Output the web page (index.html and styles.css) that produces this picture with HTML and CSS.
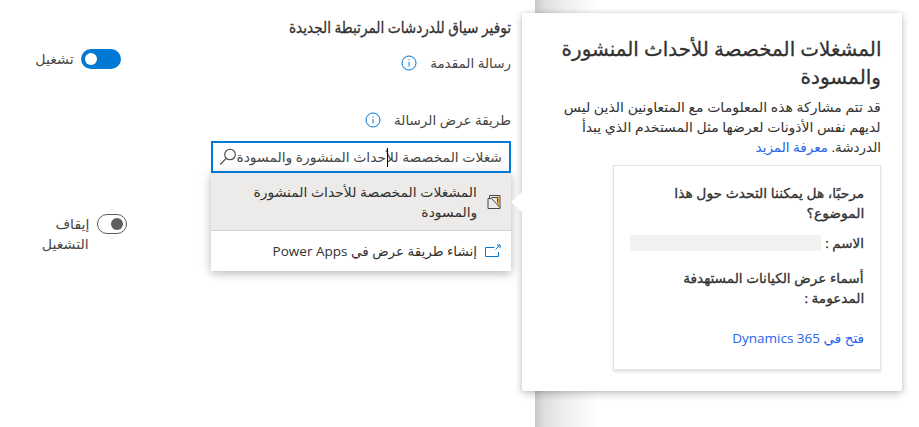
FILE: index.html
```html
<!DOCTYPE html>
<html lang="ar" dir="rtl">
<head>
<meta charset="utf-8">
<title>إعدادات الدردشة</title>
<link rel="stylesheet" href="styles.css">
</head>
<body>
<div class="page">
  <main class="settings">
    <section class="fields">
      <h3 class="section-title"><span class="line">توفير سياق للدردشات المرتبطة الجديدة</span></h3>
      <div class="label label-intro">
        <span class="line">رسالة المقدمة</span>
        <svg class="info" viewBox="0 0 16 16"><circle cx="8" cy="8" r="7"/><path d="M8 7v4.5M8 4.4v1.2"/></svg>
      </div>
      <div class="label label-view">
        <span class="line">طريقة عرض الرسالة</span>
        <svg class="info" viewBox="0 0 16 16"><circle cx="8" cy="8" r="7"/><path d="M8 7v4.5M8 4.4v1.2"/></svg>
      </div>
      <div class="combo">
        <div class="search">
          <span class="line">شغلات المخصصة للأحداث المنشورة والمسودة</span>
          <i class="caret"></i>
          <svg class="lens" viewBox="0 0 18 18"><circle cx="11" cy="6.5" r="5.3"/><path d="M7.2 10.3 1.2 16.5"/></svg>
        </div>
        <div class="menu">
          <div class="option selected">
            <svg class="form-icon" viewBox="0 0 14 16"><path class="gold" d="M11.3 2.5v9"/><path d="M2.5 4V1.5h10.5V14.5M1 4.5v10h12M1 4.5h3.5L13 13.5M4.5 3.5h6v5"/></svg>
            <div><span class="line opt-1">المشغلات المخصصة للأحداث المنشورة</span><span class="line opt-2">والمسودة</span></div>
          </div>
          <div class="option create">
            <svg class="open-icon" viewBox="0 0 16 14"><path d="M9.5 3.5h-9v9h13V8M10.5 5.5 15 1M12 1h3v3"/></svg>
            <span class="line opt-3">إنشاء طريقة عرض في Power Apps</span>
          </div>
        </div>
      </div>
    </section>
    <section class="toggles">
      <div class="toggle-row on"><span class="switch on"></span><span class="line">تشغيل</span></div>
      <div class="toggle-row off"><span class="switch off"></span><div><span class="line off-1">إيقاف</span><span class="line off-2">التشغيل</span></div></div>
    </section>
  </main>
  <div class="edge"></div>
</div>
<aside class="callout">
  <h2 class="callout-title"><span class="line t1">المشغلات المخصصة للأحداث المنشورة</span><span class="line t2">والمسودة</span></h2>
  <p class="notice"><span class="line n1">قد تتم مشاركة هذه المعلومات مع المتعاونين الذين ليس</span><span class="line n2">لديهم نفس الأذونات لعرضها مثل المستخدم الذي يبدأ</span><span class="line n3">الدردشة. <a>معرفة المزيد</a></span></p>
  <div class="card">
    <p class="greeting"><span class="line g1">مرحبًا، هل يمكننا التحدث حول هذا</span><span class="line g2">الموضوع؟</span></p>
    <div class="name"><span class="line">الاسم :</span><span class="blank"></span></div>
    <p class="entities"><span class="line e1">أسماء عرض الكيانات المستهدفة</span><span class="line e2">المدعومة :</span></p>
    <a class="open-link"><span class="line">فتح في Dynamics 365</span></a>
  </div>
</aside>
</body>
</html>
```
FILE: styles.css
```css
* { box-sizing: border-box; }
body, h2, h3, p { margin: 0; font-weight: 400; }
body {
  width: 919px; height: 427px; overflow: hidden; position: relative;
  background: #fff; color: #323130;
  font-family: "Open Sans", "DejaVu Sans", sans-serif;
  font-size: 13.5px; line-height: 20px;
}
svg { display: block; flex: none; fill: none; overflow: visible; }
.line { display: block; width: max-content; white-space: nowrap; transform-origin: right center; }
.page { display: flex; direction: ltr; height: 427px; }
.settings { display: flex; direction: rtl; width: 535px; padding-right: 24px; background: #fff; }
.edge { width: 62px; background: linear-gradient(to right, #c8c8c8, #dedede 15%, #f0f0f0 50%, #fff); }
.fields { width: 300px; padding-top: 17px; }
.section-title, .greeting, .name, .entities { -webkit-text-stroke: .3px currentColor; }
.section-title .line { transform: scaleX(.864); }
.label { display: flex; align-items: center; gap: 13px; height: 20px; color: #484644; }
.label-intro { margin-top: 16px; }
.label-view { margin-top: 37px; }
.info { width: 16px; height: 16px; stroke: #0078d4; }
.combo { margin-top: 11px; }
.search {
  position: relative; display: flex; align-items: center; justify-content: space-between;
  height: 32px; padding: 0 7px 0 6px; border: 2px solid #0078d4; color: #484644;
}
.search .line { width: 240px; transform: scaleX(1.028); }
.lens { width: 18px; height: 18px; stroke: #484644; stroke-width: 1.1; }
.caret { position: absolute; left: 174px; top: 5px; width: 1px; height: 19px; background: #000; }
.menu { box-shadow: 0 3px 8px rgba(0,0,0,.2), 0 0 14px rgba(0,0,0,.1); background: #fff; }
.option { display: flex; align-items: center; }
.selected { height: 58px; padding-right: 10px; gap: 10px; background: #edebe9; border-bottom: 1px solid #d2d0ce; }
.opt-1 { transform: scaleX(1.03); }
.opt-2 { transform: scaleX(1.03); }
.create { height: 40px; padding-right: 10px; gap: 8px; }
.form-icon { width: 14px; height: 16px; stroke: #484644; }
.form-icon .gold { stroke: #efa23c; stroke-width: 2; }
.open-icon { width: 16px; height: 14px; stroke: #0078d4; }
.toggles { width: 150px; }
.toggles .line { transform: scaleX(1.05); }
.toggle-row { display: flex; color: #484644; }
.toggle-row.on { margin: 49px 90px 0 0; gap: 7px; }
.toggle-row.off { margin: 145px 84px 0 0; gap: 8px; }
.switch { display: flex; align-items: center; justify-content: flex-end; flex: none; height: 20px; border-radius: 10px; padding: 0 4px; }
.switch::before { content: ""; width: 12px; height: 12px; border-radius: 50%; }
.switch.on { width: 40px; background: #0078d4; }
.switch.on::before { background: #fff; }
.switch.off { width: 30px; justify-content: flex-start; padding: 0 3px; border: 1px solid #605e5c; }
.switch.off::before { background: #605e5c; }
.callout {
  position: absolute; left: 522px; top: 13px; width: 380px; height: 378px; padding: 22px 21px 0;
  background: #fff; border-radius: 2px; box-shadow: 0 3px 8px rgba(0,0,0,.2), 0 0 5px rgba(0,0,0,.12);
}
.callout::before {
  content: ""; position: absolute; left: -11px; top: 178px; width: 12px; height: 22px;
  background: #fff; clip-path: polygon(0 50%, 100% 0, 100% 100%);
}
.callout-title { font-size: 20px; line-height: 28px; -webkit-text-stroke: .3px currentColor; }
.t1 { transform: scaleX(.995); }
.notice { margin-top: 6px; }
.n1 { transform: scaleX(1.04); }
.n2 { transform: scaleX(1.035); }
a { color: #2563eb; }
.card { width: 268px; height: 205px; margin-top: 8px; padding: 17px 16px 0; border: 1px solid #e4e4e4; box-shadow: 0 2px 3px rgba(0,0,0,.12); }
.greeting .line { transform: scaleX(1.025); }
.name { display: flex; gap: 4px; margin-top: 10px; align-items: center; }
.name .line { width: 39px; }
.blank { width: 191px; height: 16px; background: #f3f2f1; flex: none; }
.entities { margin-top: 15px; }
.entities .line { transform: scaleX(1.01); }
.open-link { display: block; margin-top: 20px; }
```
